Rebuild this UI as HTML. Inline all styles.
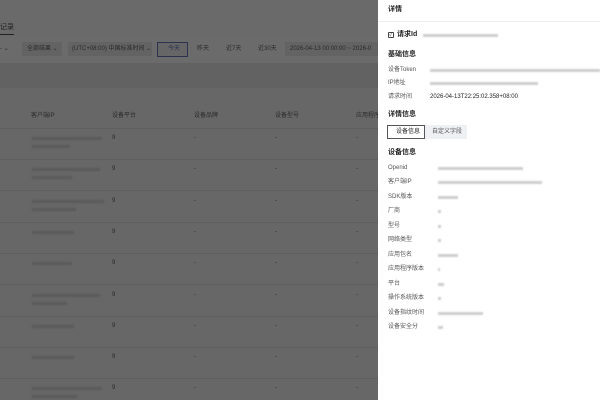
<!DOCTYPE html>
<html><head><meta charset="utf-8"><style>
*{margin:0;padding:0;box-sizing:border-box}
html,body{width:600px;height:400px;overflow:hidden}
body{position:relative;background:#666;font-family:"Liberation Sans","Noto Sans CJK SC",sans-serif;}
.l{position:absolute;left:0;top:0;width:378px;height:400px;background:#676767}
.t{position:absolute;font-size:6px;line-height:8px;color:#2a2a2a;white-space:nowrap}
.bl{position:absolute;height:3px;background:#5a5a5a;filter:blur(0.7px)}
.sep{position:absolute;left:0;width:378px;height:1px;background:#5f5f5f}
.p{position:absolute;left:378px;top:0;width:222px;height:400px;background:#fff}
.pt{position:absolute;font-size:6px;line-height:8px;color:#555;white-space:nowrap}
.pb{position:absolute;height:3px;background:#cfcfcf;filter:blur(0.7px)}
.h{position:absolute;font-size:7px;line-height:9px;font-weight:bold;color:#222;white-space:nowrap}
</style></head><body>
<div class="l">
<div style="position:absolute;top:0;left:0;width:378px;height:40px;background:#6a6a6a"></div>
<div class="t" style="left:0;top:23px;font-size:7px;line-height:9px;color:#1e1e1e">记录</div>
<div style="position:absolute;left:0;top:34px;width:14px;height:1px;background:#222"></div>
<div style="position:absolute;left:0;top:36px;width:378px;height:27px;background:#6b6b6b"></div>
<div class="t" style="left:0;top:45px">- ⌄</div>
<div style="position:absolute;left:22px;top:42px;width:40px;height:14px;background:#636363"></div>
<div class="t" style="left:27px;top:45px">全部结果 ⌄</div>
<div style="position:absolute;left:68px;top:42px;width:84px;height:14px;background:#636363"></div>
<div class="t" style="left:72px;top:45px">(UTC+08:00) 中国标准时间 ⌄</div>
<div style="position:absolute;left:157px;top:42px;width:31px;height:15px;border:1px solid #2c3350;background:#666"></div>
<div class="t" style="left:168px;top:45px;color:#2c3350">今天</div>
<div class="t" style="left:197px;top:45px">昨天</div>
<div class="t" style="left:226px;top:45px">近7天</div>
<div class="t" style="left:258px;top:45px">近30天</div>
<div style="position:absolute;left:285px;top:42px;width:93px;height:14px;background:#636363"></div>
<div class="t" style="left:290px;top:45px">2026-04-13 00:00:00 ~ 2026-0</div>
<div style="position:absolute;left:0;top:63px;width:378px;height:25px;background:#626262"></div>
<div class="t" style="left:31px;top:112px">客户端IP</div>
<div class="t" style="left:112px;top:112px">设备平台</div>
<div class="t" style="left:194px;top:112px">设备品牌</div>
<div class="t" style="left:275px;top:112px">设备型号</div>
<div class="t" style="left:356px;top:112px">应用程序</div>
<div class="sep" style="top:128px"></div>
</div>
<div class="p">
<div class="h" style="left:10px;top:5px">详情</div>
<div style="position:absolute;left:0;top:21px;width:222px;height:1px;background:#eee"></div>
<div style="position:absolute;left:10px;top:32px;width:6px;height:6px;border:1px solid #444;border-radius:1px;font-size:5px;line-height:4px;text-align:center;color:#333">✓</div>
<div class="h" style="left:19px;top:30px">请求Id</div>
<div class="pb" style="left:45px;top:34px;width:75px"></div>
<div class="h" style="left:10px;top:50px">基础信息</div>
<div class="pt" style="left:10px;top:66px">设备Token</div><div class="pb" style="left:52px;top:69px;width:170px"></div>
<div class="pt" style="left:10px;top:79px">IP地址</div><div class="pb" style="left:52px;top:82px;width:108px"></div>
<div class="pt" style="left:10px;top:93px">请求时间</div><div class="pt" style="left:52px;top:93px;color:#222">2026-04-13T22:25:02.358+08:00</div>
<div class="h" style="left:10px;top:110px">详情信息</div>
<div style="position:absolute;left:9px;top:125px;width:80px;height:14px;background:#eef0f3"></div>
<div style="position:absolute;left:9px;top:125px;width:38px;height:14px;border:1px solid #555;background:#fff"></div>
<div class="pt" style="left:18px;top:128px;color:#222">设备信息</div>
<div class="pt" style="left:54px;top:128px">自定义字段</div>
<div class="h" style="left:10px;top:148px">设备信息</div>
</div>
<script>
var L=[["Openid",85],["客户端IP",104],["SDK版本",20],["厂商",3],["型号",3],["网络类型",3],["应用包名",20],["应用程序版本",2],["平台",6],["操作系统版本",3],["设备指纹时间",45],["设备安全分",5]];
var p=document.querySelector('.p'),h='';
L.forEach(function(r,i){var c=Math.round(168+i*14.45);h+='<div class="pt" style="left:10px;top:'+(c-4)+'px">'+r[0]+'</div><div class="pb" style="left:60px;top:'+(c-1)+'px;width:'+r[1]+'px"></div>';});
p.insertAdjacentHTML('beforeend',h);
var w=[[70,38],[68,40],[72,44],[42,0],[40,0],[68,35],[42,0],[42,0],[70,45]];
var l=document.querySelector('.l'),g='';
w.forEach(function(r,i){var c=Math.round(138+i*31.3);
g+='<div class="bl" style="left:32px;top:'+(c-1)+'px;width:'+r[0]+'px"></div>';
if(r[1])g+='<div class="bl" style="left:32px;top:'+(c+7)+'px;width:'+r[1]+'px"></div>';
['9','-','-','-'].forEach(function(s,j){g+='<div class="t" style="left:'+[112,194,275,356][j]+'px;top:'+(c-4)+'px">'+s+'</div>';});
g+='<div class="sep" style="top:'+(c+21)+'px"></div>';});
l.insertAdjacentHTML('beforeend',g);
</script>
</body></html>
